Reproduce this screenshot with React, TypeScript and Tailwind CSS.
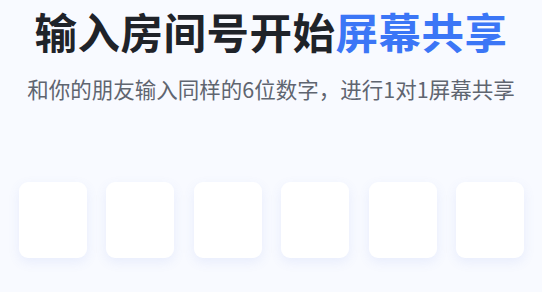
const BOXES = [0, 1, 2, 3, 4, 5];

export default function App() {
  return (
    <div
      className="w-[542px] h-[292px] bg-[#f8faff] flex flex-col items-center overflow-hidden"
      style={{ fontFamily: '"Noto Sans CJK SC", "Noto Sans", sans-serif' }}
    >
      <h1 className="mt-[3px] text-[42.5px] leading-[56px] font-bold text-[#1f2329] tracking-[0.5px]">
        输入房间号开始<span className="text-[#3b76f6]">屏幕共享</span>
      </h1>
      <p className="mt-[15px] text-[21.5px] leading-[30px] text-[#5f6570]">
        和你的朋友输入同样的6位数字，进行1对1屏幕共享
      </p>
      <div className="mt-[78px] flex gap-[19.6px] pl-[1px]">
        {BOXES.map((i) => (
          <div
            key={i}
            className="w-[68px] h-[76px] rounded-[9px] bg-white shadow-[0_4px_12px_rgba(90,120,230,0.10)]"
          />
        ))}
      </div>
    </div>
  );
}
